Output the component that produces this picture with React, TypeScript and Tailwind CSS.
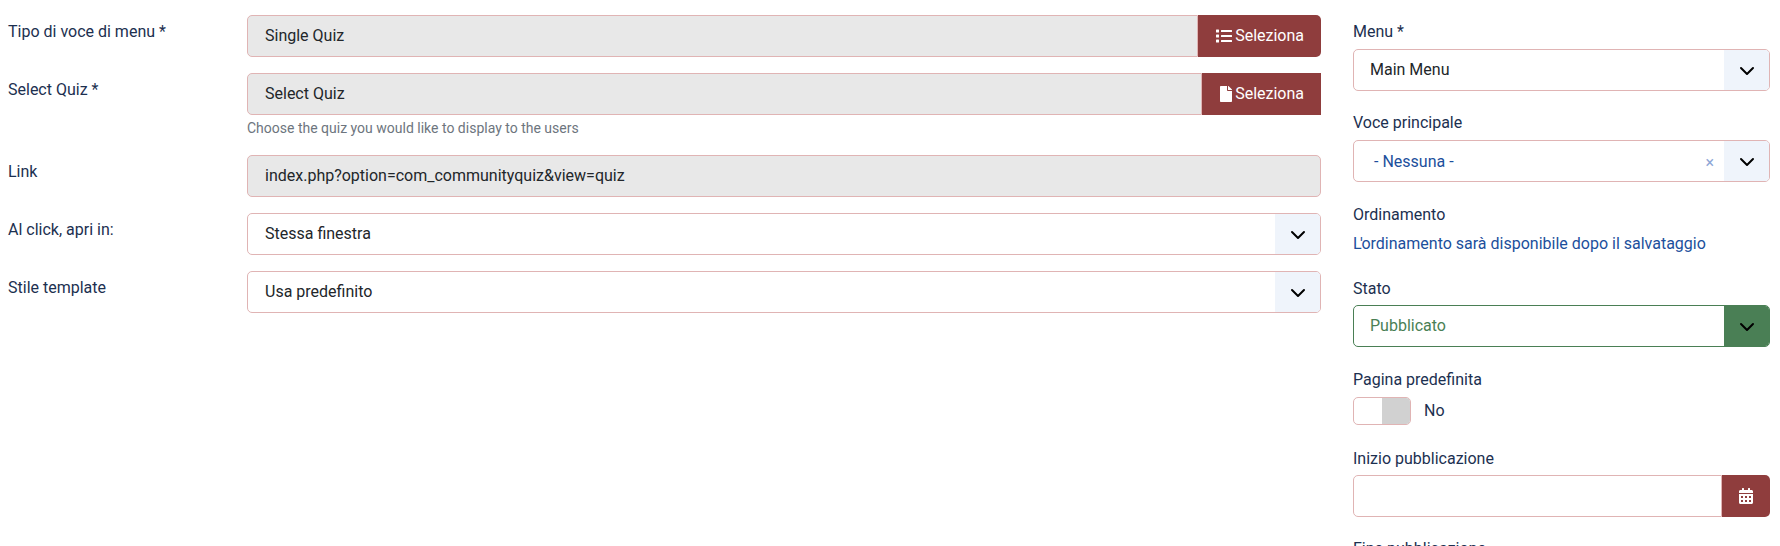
import React from "react";
import { FaList, FaFile, FaCalendarAlt } from "react-icons/fa";

const Chevron = ({ color = "#000" }: { color?: string }) => (
  <svg width="16" height="16" viewBox="0 0 16 16" fill="none" stroke={color} strokeWidth="2" strokeLinecap="round" strokeLinejoin="round">
    <path d="M2 5l6 6 6-6" />
  </svg>
);

const Select = ({ value, pad = "pl-[17px]" }: { value: string; pad?: string }) => (
  <div className="flex h-[42px] shrink-0 overflow-hidden rounded-[5px] border border-[#e0b4b4] bg-white">
    <div className={`flex flex-1 items-center text-[#22262a] ${pad}`}>{value}</div>
    <div className="flex w-[45px] items-center justify-center bg-[#eff4fb] pt-[1px]">
      <Chevron />
    </div>
  </div>
);

const ReadOnly = ({ value, button }: { value: string; button?: React.ReactNode }) => (
  <div className="flex h-[42px] shrink-0">
    <div className={`flex flex-1 items-center border border-[#e0b4b4] bg-[#e8e8e8] pl-[17px] text-[#22262a] ${button ? "rounded-l-[5px]" : "rounded-[5px]"}`}>
      {value}
    </div>
    {button}
  </div>
);

const PickButton = ({ icon, rounded }: { icon: React.ReactNode; rounded?: boolean }) => (
  <div className={`flex items-center gap-[3px] bg-[#8f3d3d] pl-[18px] pr-[17px] text-white ${rounded ? "rounded-r-[5px]" : ""}`}>
    {icon}
    <span>Seleziona</span>
  </div>
);

const Row = ({ label, children, className = "" }: { label: string; children: React.ReactNode; className?: string }) => (
  <div className={`flex shrink-0 ${className}`}>
    <div className="w-[247px] pl-[8px] pt-[5px] text-[#1c3050]">{label}</div>
    <div className="flex-1">{children}</div>
  </div>
);

const Label = ({ children, className = "" }: { children: React.ReactNode; className?: string }) => (
  <div className={`h-[24px] shrink-0 leading-[24px] text-[#1c3050] ${className}`}>{children}</div>
);

export default function App() {
  return (
    <div className="flex h-[546px] overflow-hidden bg-white pt-[15px] pr-[10px] font-['Roboto',sans-serif] text-[16px] leading-[24px]">
      <div className="flex w-[1321px] shrink-0 flex-col">
        <Row label="Tipo di voce di menu *">
          <ReadOnly value="Single Quiz" button={<PickButton rounded icon={<FaList className="h-[16px] w-[16px]" />} />} />
        </Row>
        <Row label="Select Quiz *" className="mt-[16px]">
          <ReadOnly value="Select Quiz" button={<PickButton icon={<FaFile className="h-[16px] w-[12px]" />} />} />
          <div className="mt-[1px] h-[24px] text-[14px] leading-[24px] text-[#6d757e]">Choose the quiz you would like to display to the users</div>
        </Row>
        <Row label="Link" className="mt-[15px]">
          <ReadOnly value="index.php?option=com_communityquiz&view=quiz" />
        </Row>
        <Row label="Al click, apri in:" className="mt-[16px]">
          <Select value="Stessa finestra" />
        </Row>
        <Row label="Stile template" className="mt-[16px]">
          <Select value="Usa predefinito" />
        </Row>
      </div>
      <div className="ml-[32px] flex flex-1 flex-col pt-[5px]">
        <Label>Menu *</Label>
        <div className="mt-[5px] shrink-0"><Select value="Main Menu" pad="pl-[16px]" /></div>
        <Label className="mt-[20px]">Voce principale</Label>
        <div className="mt-[5px] flex h-[42px] shrink-0 overflow-hidden rounded-[5px] border border-[#e0b4b4] bg-white">
          <div className="flex flex-1 items-center pl-[20px] pt-[2px] text-[#1c4f9c]">- Nessuna -</div>
          <div className="flex items-center pr-[10px] pt-[3px] text-[16px] text-[#8ea6d6]">×</div>
          <div className="flex w-[45px] items-center justify-center bg-[#eff4fb] pt-[1px]"><Chevron /></div>
        </div>
        <Label className="mt-[21px]">Ordinamento</Label>
        <div className="mt-[5px] h-[24px] shrink-0 text-[#1c4f9c]"><span className="tracking-[-1.5px]">L'</span>ordinamento sarà disponibile dopo il salvataggio</div>
        <Label className="mt-[21px]">Stato</Label>
        <div className="mt-[4px] flex h-[42px] shrink-0 overflow-hidden rounded-[5px] border border-[#4a7f55] bg-white">
          <div className="flex flex-1 items-center pl-[16px] text-[#4a7f55]">Pubblicato</div>
          <div className="flex w-[45px] items-center justify-center bg-[#4a7f55] pt-[1px]"><Chevron /></div>
        </div>
        <Label className="mt-[21px]">Pagina predefinita</Label>
        <div className="mt-[5px] flex shrink-0 items-center">
          <div className="flex h-[28px] w-[58px] justify-end overflow-hidden rounded-[5px] border border-[#e0b4b4] bg-white">
            <div className="w-[28px] bg-[#d1d1d1]" />
          </div>
          <span className="ml-[13px] text-[#1c3050]">No</span>
        </div>
        <Label className="mt-[22px]">Inizio pubblicazione</Label>
        <div className="mt-[4px] flex h-[42px] shrink-0">
          <div className="flex-1 rounded-l-[5px] border border-[#e0b4b4] bg-white" />
          <div className="flex w-[48px] items-center justify-center rounded-r-[5px] bg-[#8f3d3d] text-white">
            <FaCalendarAlt className="h-[16px] w-[14px]" />
          </div>
        </div>
        <Label className="mt-[20px]">Fine pubblicazione</Label>
      </div>
    </div>
  );
}
